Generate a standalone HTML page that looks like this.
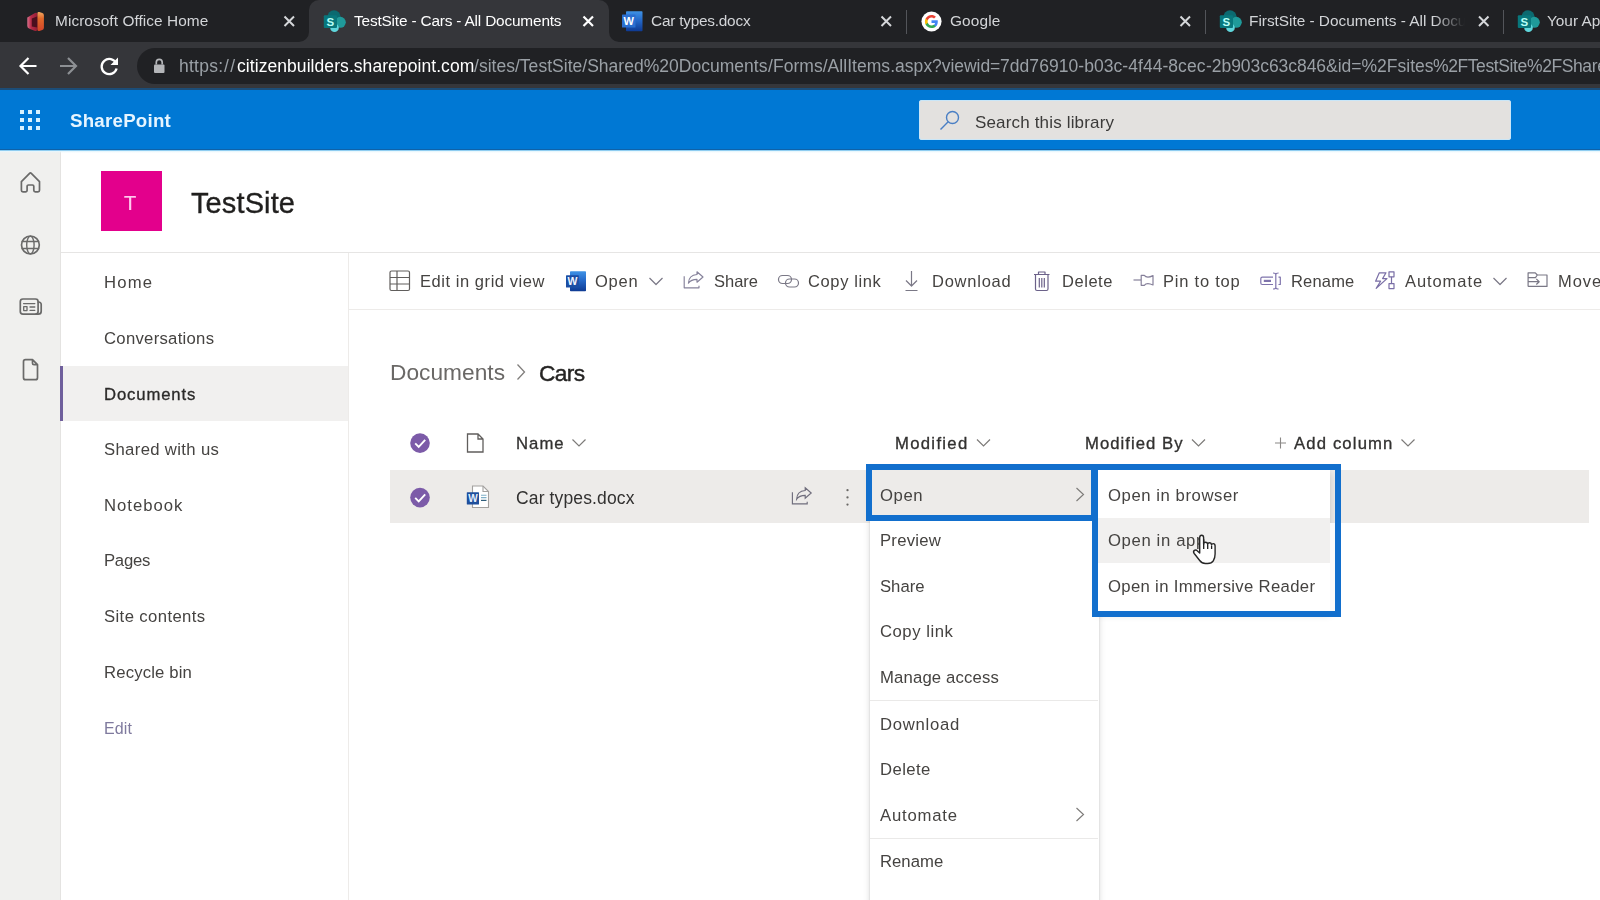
<!DOCTYPE html>
<html><head><meta charset="utf-8"><title>TestSite - Cars - All Documents</title>
<style>
html,body{margin:0;padding:0;background:#fff;}
#root{position:relative;width:1600px;height:900px;overflow:hidden;background:#fff;font-family:"Liberation Sans",sans-serif;}
#root *{box-sizing:border-box;}
.a{position:absolute;}
.t{position:absolute;white-space:pre;font-family:"Liberation Sans",sans-serif;will-change:transform;}
svg{position:absolute;overflow:visible;}
.fade{-webkit-mask-image:linear-gradient(90deg,#000 0,#000 185px,transparent 216px);mask-image:linear-gradient(90deg,#000 0,#000 185px,transparent 216px);}

</style></head>
<body>
<div id="root">
<!-- ===== browser chrome ===== -->
<div class="a" style="left:0;top:0;width:1600px;height:43px;background:#202124;"></div>
<div class="a" style="left:0;top:42px;width:1600px;height:48px;background:#35363a;"></div>
<!-- active tab -->
<div class="a" style="left:309px;top:0;width:300px;height:43px;background:#35363a;border-radius:10px 10px 0 0;"></div>
<svg style="left:299px;top:32px" width="10" height="10"><path d="M10 0 V10 H0 A10 10 0 0 0 10 0Z" fill="#35363a"/></svg>
<svg style="left:609px;top:32px" width="10" height="10"><path d="M0 0 V10 H10 A10 10 0 0 1 0 0Z" fill="#35363a"/></svg>
<!-- tab separators -->
<div class="a" style="left:906px;top:10px;width:1px;height:24px;background:#53555a;"></div>
<div class="a" style="left:1205px;top:10px;width:1px;height:24px;background:#53555a;"></div>
<div class="a" style="left:1503px;top:10px;width:1px;height:24px;background:#53555a;"></div>
<!-- close X's -->
<svg style="left:0;top:0" width="1600" height="43" fill="none" stroke-linecap="butt">
 <g stroke="#d5d7da" stroke-width="2">
  <path d="M284.5 16.5 l9.5 9.5 m0 -9.5 l-9.5 9.5"/>
  <path d="M881.5 16.5 l9.5 9.5 m0 -9.5 l-9.5 9.5"/>
  <path d="M1180.5 16.5 l9.5 9.5 m0 -9.5 l-9.5 9.5"/>
  <path d="M1479 16.5 l9.5 9.5 m0 -9.5 l-9.5 9.5"/>
 </g>
 <path d="M583.5 16.5 l9.5 9.5 m0 -9.5 l-9.5 9.5" stroke="#ffffff" stroke-width="2.2"/>
</svg>
<!-- favicons -->
<svg style="left:26px;top:10px" width="20" height="23" viewBox="0 0 20 23">
 <defs>
  <linearGradient id="og1" x1="0" y1="0" x2="1" y2="0"><stop offset="0" stop-color="#d9708c"/><stop offset="0.350" stop-color="#b82d4a"/><stop offset="1" stop-color="#8e1c32"/></linearGradient>
  <linearGradient id="og2" x1="0" y1="0" x2="0" y2="1"><stop offset="0" stop-color="#f2a862"/><stop offset="0.350" stop-color="#e0692a"/><stop offset="1" stop-color="#d2432a"/></linearGradient>
 </defs>
 <path d="M1.300 7.500 L9 3 Q11.700 2 11.700 4.500 V18.500 Q11.700 21.800 8.500 20.800 L3.500 18.800 Q1.300 18 1.300 16 Z" fill="url(#og1)"/>
 <path d="M5.800 8.500 L11.700 6.200 V17.500 L5.800 16.500 Z" fill="#4b0f1e"/>
 <path d="M11.500 3 Q11.500 1.500 13.300 2 L16.300 3 Q17.900 3.500 17.900 5.200 V17.800 Q17.900 19.500 16.300 20 L13.300 21 Q11.500 21.400 11.500 19.800 Z" fill="url(#og2)"/>
</svg>
<svg id="sp1" style="left:323px;top:10px" width="23" height="23" viewBox="0 0 23 23">
 <circle cx="11" cy="6.800" r="6.600" fill="#0b6a70"/><circle cx="17.300" cy="12.300" r="5.500" fill="#1f9a9a"/><circle cx="11.500" cy="17.800" r="4.300" fill="#5fd6dc"/>
 <rect x="0.800" y="5.300" width="13.200" height="12.600" rx="1" fill="#08777c"/>
 <text x="7.400" y="15.700" font-family="Liberation Sans, sans-serif" font-size="11.500" font-weight="700" fill="#b8fff8" text-anchor="middle">S</text>
</svg>
<svg style="left:1219px;top:10px" width="23" height="23" viewBox="0 0 23 23">
 <circle cx="11" cy="6.800" r="6.600" fill="#0b6a70"/><circle cx="17.300" cy="12.300" r="5.500" fill="#1f9a9a"/><circle cx="11.500" cy="17.800" r="4.300" fill="#5fd6dc"/>
 <rect x="0.800" y="5.300" width="13.200" height="12.600" rx="1" fill="#08777c"/>
 <text x="7.400" y="15.700" font-family="Liberation Sans, sans-serif" font-size="11.500" font-weight="700" fill="#b8fff8" text-anchor="middle">S</text>
</svg>
<svg style="left:1517px;top:10px" width="23" height="23" viewBox="0 0 23 23">
 <circle cx="11" cy="6.800" r="6.600" fill="#0b6a70"/><circle cx="17.300" cy="12.300" r="5.500" fill="#1f9a9a"/><circle cx="11.500" cy="17.800" r="4.300" fill="#5fd6dc"/>
 <rect x="0.800" y="5.300" width="13.200" height="12.600" rx="1" fill="#08777c"/>
 <text x="7.400" y="15.700" font-family="Liberation Sans, sans-serif" font-size="11.500" font-weight="700" fill="#b8fff8" text-anchor="middle">S</text>
</svg>
<!-- word favicon -->
<svg style="left:622px;top:10.500px" width="21" height="21" viewBox="0 0 21 21">
 <rect x="4" y="0.200" width="16.500" height="20" rx="0.800" fill="url(#wg)"/>
 <rect x="0" y="3.500" width="13.500" height="13" rx="0.600" fill="#2b6fd0"/>
 <text x="6.700" y="14.200" font-family="Liberation Sans, sans-serif" font-size="11" font-weight="700" fill="#ffffff" text-anchor="middle">W</text>
</svg>
<!-- google favicon -->
<svg style="left:920.5px;top:10.5px" width="21" height="21" viewBox="0 0 24 24">
 <circle cx="12" cy="12" r="11.5" fill="#fff"/>
 <path d="M19.2 12.2c0-.55-.05-1.05-.14-1.55H12v2.95h4.05c-.18.95-.7 1.75-1.5 2.28v1.9h2.43c1.42-1.3 2.22-3.23 2.22-5.58z" fill="#4285f4"/>
 <path d="M12 19.5c2.03 0 3.73-.67 4.98-1.82l-2.43-1.9c-.67.45-1.53.72-2.55.72-1.96 0-3.62-1.32-4.22-3.1H5.27v1.96C6.5 17.82 9.05 19.5 12 19.5z" fill="#34a853"/>
 <path d="M7.78 13.4c-.15-.45-.24-.93-.24-1.4s.09-.95.24-1.4V8.64H5.27C4.76 9.65 4.47 10.8 4.47 12s.29 2.35.8 3.36l2.51-1.96z" fill="#fbbc05"/>
 <path d="M12 7.5c1.1 0 2.1.38 2.88 1.13l2.16-2.16C15.72 5.25 14.03 4.5 12 4.5 9.05 4.5 6.5 6.18 5.27 8.64l2.51 1.96c.6-1.78 2.26-3.1 4.22-3.1z" fill="#ea4335"/>
</svg>
<!-- toolbar -->
<div class="a" style="left:137px;top:47.5px;width:1500px;height:36px;border-radius:18px;background:#202124;"></div>
<svg style="left:0;top:42px" width="180" height="48" fill="none" stroke-linecap="butt" stroke-linejoin="miter">
 <path d="M36.5 24 H21 M28.5 16 L20.5 24 L28.5 32" stroke="#ffffff" stroke-width="2.2"/>
 <path d="M60 24 H75.5 M68 16 L76 24 L68 32" stroke="#8d9094" stroke-width="2.2"/>
 <path d="M116.2 21.5 A7.6 7.6 0 1 0 116.6 26.5" stroke="#ffffff" stroke-width="2.3"/>
 <path d="M118 15.5 V23 H110.5 Z" fill="#ffffff" stroke="none"/>
 <rect x="154" y="22.5" width="10.5" height="8.5" rx="1" fill="#b4b6b9" stroke="none"/>
 <path d="M156.3 22.5 V20.3 a2.95 2.95 0 0 1 5.9 0 V22.5" stroke="#b4b6b9" stroke-width="1.7"/>
</svg>
<!-- ===== suite bar ===== -->
<div class="a" style="left:0;top:89px;width:1600px;height:61px;background:#0078d4;"></div>
<div class="a" style="left:0;top:88px;width:1600px;height:2px;background:#1b4d78;"></div>
<svg style="left:20px;top:110px" width="20" height="20" fill="#d8f2ff">
 <rect x="0" y="0" width="4" height="4"/><rect x="8" y="0" width="4" height="4"/><rect x="16" y="0" width="4" height="4"/>
 <rect x="0" y="8" width="4" height="4"/><rect x="8" y="8" width="4" height="4"/><rect x="16" y="8" width="4" height="4"/>
 <rect x="0" y="16" width="4" height="4"/><rect x="8" y="16" width="4" height="4"/><rect x="16" y="16" width="4" height="4"/>
</svg>
<div class="a" style="left:0;top:149px;width:1600px;height:1px;background:#0f62a8;"></div>
<div class="a" style="left:0;top:150px;width:1600px;height:3px;background:linear-gradient(#8fcdf1 0,#8fcdf1 28%,#e6f6fd 40%,rgba(255,255,255,0) 100%);z-index:2;"></div>
<!-- search box -->
<div class="a" style="left:918.5px;top:100px;width:592px;height:40px;border-radius:3px;background:#e3e1df;box-shadow:inset 0 0 0 1px #c9e6f8;"></div>
<svg style="left:938px;top:109px" width="24" height="24" fill="none" stroke="#4a7fc4" stroke-width="1.4">
 <circle cx="14.5" cy="8.5" r="6"/><path d="M10.2 12.8 L2.5 20.5"/>
</svg>
<!-- ===== app bar left ===== -->
<div class="a" style="left:0;top:150px;width:60px;height:750px;background:#f0f0ee;"></div>
<div class="a" style="left:60px;top:150px;width:1px;height:750px;background:#e4e3e1;"></div>
<svg style="left:0;top:150px" width="60" height="260" fill="none" stroke="#6a6a69" stroke-width="1.7" stroke-linejoin="round" stroke-linecap="round">
 <!-- home (abs y = 150 + y) -->
 <path d="M21.4 31.6 L29.6 23.3 a1.2 1.2 0 0 1 1.700 0 L39.500 31.600 V40.300 a1.500 1.500 0 0 1 -1.500 1.500 H35.300 a1.500 1.500 0 0 1 -1.500 -1.500 V36.300 a1.300 1.300 0 0 0 -1.300 -1.300 H28.400 a1.300 1.300 0 0 0 -1.300 1.300 V40.300 a1.500 1.500 0 0 1 -1.500 1.500 H22.900 a1.500 1.500 0 0 1 -1.500 -1.500 Z"/>
 <!-- globe -->
 <circle cx="30.4" cy="95" r="8.9"/><ellipse cx="30.400" cy="95" rx="3.700" ry="8.900" stroke-width="1.400"/><path d="M22.300 91.500 H38.500 M22.300 98.500 H38.500" stroke-width="1.400"/>
 <!-- news -->
 <rect x="20.300" y="149" width="17.800" height="15.200" rx="2.600"/><path d="M38.100 152 H38.700 a2.500 2.500 0 0 1 2.500 2.500 V161.200 a3 3 0 0 1 -3 3 H36"/>
 <path d="M23.600 153.600 H34.800" stroke-width="1.400"/><rect x="23.700" y="156.600" width="3.300" height="4" stroke-width="1.300"/><path d="M30 157 H34.800 M30 160.300 H34.800" stroke-width="1.300"/>
 <!-- page -->
 <path d="M25.500 209.700 H32.500 L37.500 214.700 V227.700 a2 2 0 0 1 -2 2 H25.500 a2 2 0 0 1 -2 -2 V211.700 a2 2 0 0 1 2 -2 Z M32.500 209.700 V213.200 a1.500 1.500 0 0 0 1.500 1.500 H37.500"/>
</svg>
<!-- ===== site header ===== -->
<div class="a" style="left:101px;top:171px;width:61px;height:60px;background:#e3008c;"></div>
<div class="a" style="left:61px;top:252px;width:1539px;height:1px;background:#e6e5e4;"></div>
<!-- ===== left nav ===== -->
<div class="a" style="left:348px;top:253px;width:1px;height:647px;background:#edebe9;"></div>
<div class="a" style="left:61px;top:366px;width:287px;height:55px;background:#f1f0ef;"></div>
<div class="a" style="left:60px;top:366px;width:3px;height:55px;background:#6f5f9c;"></div>
<!-- ===== command bar ===== -->
<div class="a" style="left:349px;top:309px;width:1251px;height:1px;background:#edebe9;"></div>
<svg id="cmdicons" style="left:0;top:260px" width="1600" height="45" fill="none" stroke="#6b6189" stroke-width="1.2" stroke-linejoin="round">
 <!-- grid -->
 <g stroke="#605e5c"><rect x="390" y="11" width="19.5" height="19.5" rx="1.5"/><path d="M390 17.5 H409.5 M390 24 H409.5 M397 11 V30.5"/></g>
 <!-- open chevron -->
 <path d="M649.5 18 L656 24.5 L662.5 18" stroke="#7a7886"/>
 <!-- share -->
 <g stroke="#85819a" stroke-width="1.15" transform="translate(0,1.6)"><path d="M684.2 14.600 V26.200 H699 V24.200"/><path d="M697 10.200 L703 15.400 L697 20.600 V17.800 C692.700 17.800 690.200 19 688.400 21.600 C688.600 16.700 691.600 13.300 697 12.900 Z"/></g>
 <!-- copy link -->
 <rect x="778.5" y="15.5" width="13" height="8" rx="4" stroke="#7a7886"/><rect x="785.5" y="19" width="13" height="8" rx="4" stroke="#7a7886"/>
 <!-- download -->
 <path d="M911.5 11 V26 M906 20.5 L911.5 26 L917 20.5 M905.5 30.5 H917.5" stroke="#7a7886"/>
 <!-- delete -->
 <path d="M1034 14.5 H1049.5 M1038.5 14.5 V12 H1045 V14.5 M1035.5 14.5 V29 a1.5 1.5 0 0 0 1.5 1.5 H1046.5 a1.5 1.5 0 0 0 1.5 -1.5 V14.5 M1039.3 18 V27.5 M1041.8 18 V27.5 M1044.3 18 V27.5"/>
 <!-- pin -->
 <path d="M1133.5 20 H1141" stroke="#86809a"/><path d="M1141.2 15.3 H1144.3 C1146 17.6 1149.5 17.3 1153 15.6 V25 C1149.500 23.300 1146 23 1144.300 25.300 H1141.200 Z" stroke="#86809a"/>
 <!-- rename -->
 <path d="M1273 17.2 H1262.300 a1.500 1.500 0 0 0 -1.500 1.500 V23 a1.500 1.500 0 0 0 1.500 1.500 H1273 M1278.500 17.200 H1280.300 V24.500 H1278.500" stroke="#7f74ac"/><path d="M1263.800 20.900 H1271" stroke="#7f74ac" stroke-width="2.200"/><path d="M1275.800 14 V28 M1273 13 Q1275.800 13 1275.800 14.500 Q1275.800 13 1278.600 13 M1273 29 Q1275.800 29 1275.800 27.500 Q1275.800 29 1278.600 29" stroke="#7f74ac"/>
 <!-- automate -->
 <path d="M1379.300 12.800 H1386 L1382.600 18.600 H1387 L1376.200 28.300 L1380.600 21.200 H1375.600 Z" stroke="#7a6fa6"/><rect x="1389" y="11.800" width="5" height="5" stroke="#7a6fa6"/><rect x="1389" y="23.600" width="5" height="5" stroke="#7a6fa6"/><path d="M1391.500 16.800 V23.600" stroke="#7a6fa6"/>
 <path d="M1493.500 18 L1500 24.500 L1506.500 18" stroke="#7a7886"/>
 <!-- move -->
 <path d="M1528.100 26.400 V12.800 H1535.300 L1537.300 15 H1547 V26.400 H1528.100 M1528.100 17.600 H1535.500 L1537.300 15 M1528.100 21.700 H1539 M1536.300 18.900 L1539.200 21.700 L1536.300 24.500" stroke="#7a7886"/>
</svg>
<!-- word icon in command bar -->
<svg style="left:565.5px;top:270.5px" width="21" height="21" viewBox="0 0 21 21">
 <defs><linearGradient id="wg" x1="0" y1="0" x2="0" y2="1"><stop offset="0" stop-color="#3f93e6"/><stop offset="0.45" stop-color="#2569c9"/><stop offset="1" stop-color="#0e3a93"/></linearGradient></defs>
 <rect x="4" y="0.200" width="16" height="20" rx="0.800" fill="url(#wg)"/>
 <rect x="0" y="4.200" width="12.800" height="12.300" rx="0.600" fill="#1c4ea3"/>
 <text x="6.400" y="14.300" font-family="Liberation Sans, sans-serif" font-size="10.500" font-weight="700" fill="#f2f6ff" text-anchor="middle">W</text>
</svg>
<!-- breadcrumb chevron -->
<svg style="left:515px;top:362px" width="12" height="20" fill="none" stroke="#807e7c" stroke-width="1.3"><path d="M2.5 2.5 L9.5 10 L2.5 17.5"/></svg>
<!-- ===== list ===== -->
<div class="a" style="left:390px;top:470px;width:1199px;height:53px;background:#edebe9;"></div>
<svg id="listicons" style="left:0;top:420px" width="1600" height="110" fill="none" stroke="#605e5c" stroke-width="1.2">
 <!-- checks -->
 <circle cx="420" cy="23.1" r="9.8" fill="#7c5ba8" stroke="none"/><path d="M415.2 23.4 L418.7 26.9 L425.2 19.9" stroke="#fff" stroke-width="1.9"/>
 <circle cx="420" cy="77.600" r="9.800" fill="#7c5ba8" stroke="none"/><path d="M415.200 77.900 L418.700 81.400 L425.200 74.400" stroke="#fff" stroke-width="1.9"/>
 <!-- file icon header -->
 <path d="M467.5 14 H478 L483 19 V32 H467.5 Z M478 14 V19 H483" stroke-width="1.3"/>
 <!-- chevrons -->
 <g stroke="#7d7b79"><path d="M572.500 19.500 L579 26 L585.500 19.500"/><path d="M977 19.5 L983.5 26 L990 19.5"/><path d="M1192 19.5 L1198.5 26 L1205 19.5"/><path d="M1401.500 19.500 L1408 26 L1414.500 19.500"/></g>
 <!-- plus -->
 <path d="M1275 23 H1286 M1280.5 17.500 V28.5" stroke="#8a8886" stroke-width="1.1"/>
 <!-- share small -->
 <g stroke="#6f6d7c" stroke-width="1.150" transform="translate(108.2,57.6)"><path d="M684.200 14.600 V26.200 H699 V24.200"/><path d="M697 10.200 L703 15.400 L697 20.600 V17.800 C692.700 17.800 690.200 19 688.400 21.600 C688.600 16.700 691.600 13.300 697 12.900 Z"/></g>
 <!-- ellipsis -->
 <g fill="#6a6866" stroke="none"><circle cx="847.500" cy="70.200" r="1.150"/><circle cx="847.500" cy="77.400" r="1.150"/><circle cx="847.500" cy="84.600" r="1.150"/></g>
</svg>
<!-- docx row icon -->
<svg style="left:466px;top:485px" width="24" height="24" viewBox="0 0 24 24">
 <path d="M6.5 1 H17 L22.500 6.500 V22.500 H6.500 Z" fill="#fff" stroke="#a3a19f" stroke-width="1.100"/>
 <path d="M17 1 V6.500 H22.500" fill="none" stroke="#a3a19f" stroke-width="1.100"/>
 <path d="M15 10.300 H20.500 M15 12.600 H20.500" stroke="#7fb0c8" stroke-width="1.100"/><path d="M15 15.400 H20.500" stroke="#2e5c7a" stroke-width="1.200"/>
 <rect x="0.800" y="7.300" width="12.200" height="12.200" rx="0.500" fill="#1f4f9c"/>
 <text x="6.900" y="17.100" font-family="Liberation Sans, sans-serif" font-size="10" font-weight="700" fill="#e8f2ff" text-anchor="middle">W</text>
</svg>
<!-- ===== context menu ===== -->
<div class="a" style="left:870px;top:468px;width:229px;height:440px;background:#fff;box-shadow:0 3px 7px rgba(0,0,0,.14),0 0 2px rgba(0,0,0,.14);"></div>
<div class="a" style="left:870px;top:470px;width:228px;height:47px;background:#edebe9;"></div>
<div class="a" style="left:870px;top:700px;width:228px;height:1px;background:#eae9e8;"></div>
<div class="a" style="left:870px;top:838px;width:228px;height:1px;background:#eae9e8;"></div>
<svg style="left:1070px;top:479.5px" width="20" height="350" fill="none" stroke="#7d7b79" stroke-width="1.150"><path d="M6.500 8 L13.500 14.500 L6.500 21"/><path d="M6.500 328 L13.500 334.500 L6.500 341"/></svg>
<!-- submenu -->
<div class="a" style="left:1098px;top:470px;width:232px;height:141px;background:#fff;box-shadow:0 3px 8px rgba(0,0,0,.18);"></div>
<div class="a" style="left:1098px;top:518px;width:232px;height:45px;background:#f1f0ef;"></div>
<div class="a" style="left:1330px;top:523px;width:5px;height:88px;background:#fbfbfb;"></div>

<span class="t" style="left:55.307px;top:8.50px;line-height:24px;font-size:15.4px;font-weight:400;color:#d3d5d8;letter-spacing:0.068px;">Microsoft Office Home</span>
<span class="t" style="left:353.807px;top:8.50px;line-height:24px;font-size:15.4px;font-weight:400;color:#ffffff;letter-spacing:-0.180px;">TestSite - Cars - All Documents</span>
<span class="t" style="left:651.307px;top:8.50px;line-height:24px;font-size:15.4px;font-weight:400;color:#d3d5d8;letter-spacing:-0.234px;">Car types.docx</span>
<span class="t" style="left:950.307px;top:8.50px;line-height:24px;font-size:15.4px;font-weight:400;color:#d3d5d8;letter-spacing:0.124px;">Google</span>
<span class="t fade" style="left:1249.307px;top:8.50px;line-height:24px;font-size:15.4px;font-weight:400;color:#d3d5d8;letter-spacing:-0.022px;">FirstSite - Documents - All Docu</span>
<span class="t" style="left:1547.307px;top:8.50px;line-height:24px;font-size:15.4px;font-weight:400;color:#d3d5d8;letter-spacing:-0.022px;">Your Ap</span>
<span class="t" style="left:178.9px;top:54.00px;line-height:24px;font-size:17.5px;font-weight:400;color:#9aa0a6;letter-spacing:0.248px;">https:</span>
<span class="t" style="left:224.2px;top:54.00px;line-height:24px;font-size:17.5px;font-weight:400;color:#9aa0a6;letter-spacing:1.433px;">//</span>
<span class="t" style="left:236.6px;top:54.00px;line-height:24px;font-size:17.5px;font-weight:400;color:#ffffff;letter-spacing:0.066px;">citizenbuilders.sharepoint.com</span>
<span class="t" style="left:474px;top:54.00px;line-height:24px;font-size:17.5px;font-weight:400;color:#9aa0a6;letter-spacing:0.021px;">/sites/TestSite/Shared%20Documents</span>
<span class="t" style="left:767.5px;top:54.00px;line-height:24px;font-size:17.5px;font-weight:400;color:#9aa0a6;letter-spacing:0.041px;">/Forms/AllItems.aspx</span>
<span class="t" style="left:931.7px;top:54.00px;line-height:24px;font-size:17.5px;font-weight:400;color:#9aa0a6;letter-spacing:-0.037px;">?viewid=</span>
<span class="t" style="left:1000px;top:54.00px;line-height:24px;font-size:17.5px;font-weight:400;color:#9aa0a6;letter-spacing:0.051px;">7dd76910-b03c-4f44-8cec</span>
<span class="t" style="left:1205.5px;top:54.00px;line-height:24px;font-size:17.5px;font-weight:400;color:#9aa0a6;letter-spacing:-0.050px;">-2b903c63c846</span>
<span class="t" style="left:1325.5px;top:54.00px;line-height:24px;font-size:17.5px;font-weight:400;color:#9aa0a6;letter-spacing:0.001px;">&amp;id=%2Fsites</span>
<span class="t" style="left:1433px;top:54.00px;line-height:24px;font-size:17.5px;font-weight:400;color:#9aa0a6;letter-spacing:-0.403px;">%2FTestSite</span>
<span class="t" style="left:1526.8px;top:54.00px;line-height:24px;font-size:17.5px;font-weight:400;color:#9aa0a6;letter-spacing:-0.403px;">%2FShared%20Documents</span>
<span class="t" style="left:70.1585px;top:107.50px;line-height:26px;font-size:18.7px;font-weight:700;color:#e6f5ff;letter-spacing:0.243px;">SharePoint</span>
<span class="t" style="left:974.535px;top:110.50px;line-height:24px;font-size:17px;font-weight:400;color:#3b3a39;letter-spacing:0.161px;">Search this library</span>
<span class="t" style="left:124.3px;top:189.00px;line-height:28px;font-size:20px;font-weight:400;color:#ffc8ee;letter-spacing:0.781px;-webkit-text-stroke:0.24px #ffc8ee;">T</span>
<span class="t" style="left:191.295px;top:183.00px;line-height:40px;font-size:29px;font-weight:400;color:#201f1e;letter-spacing:0.117px;-webkit-text-stroke:0.35px #201f1e;">TestSite</span>
<span class="t" style="left:103.7485px;top:270.50px;line-height:24px;font-size:16.7px;font-weight:400;color:#454341;letter-spacing:1.172px;">Home</span>
<span class="t" style="left:103.7485px;top:326.50px;line-height:24px;font-size:16.7px;font-weight:400;color:#454341;letter-spacing:0.279px;">Conversations</span>
<span class="t" style="left:103.7485px;top:382.50px;line-height:24px;font-size:16.7px;font-weight:400;color:#2b2a29;letter-spacing:0.855px;-webkit-text-stroke:0.32px #2b2a29;">Documents</span>
<span class="t" style="left:103.7485px;top:437.50px;line-height:24px;font-size:16.7px;font-weight:400;color:#454341;letter-spacing:0.344px;">Shared with us</span>
<span class="t" style="left:103.7485px;top:493.50px;line-height:24px;font-size:16.7px;font-weight:400;color:#454341;letter-spacing:0.971px;">Notebook</span>
<span class="t" style="left:103.7485px;top:548.50px;line-height:24px;font-size:16.7px;font-weight:400;color:#454341;letter-spacing:-0.265px;">Pages</span>
<span class="t" style="left:103.7485px;top:604.50px;line-height:24px;font-size:16.7px;font-weight:400;color:#454341;letter-spacing:0.386px;">Site contents</span>
<span class="t" style="left:103.7485px;top:660.50px;line-height:24px;font-size:16.7px;font-weight:400;color:#454341;letter-spacing:0.158px;">Recycle bin</span>
<span class="t" style="left:103.78px;top:716.50px;line-height:24px;font-size:16px;font-weight:400;color:#7f7a9e;letter-spacing:0.090px;">Edit</span>
<span class="t" style="left:420.2575px;top:269.00px;line-height:24px;font-size:16.5px;font-weight:400;color:#454341;letter-spacing:0.554px;">Edit in grid view</span>
<span class="t" style="left:595.2575px;top:269.00px;line-height:24px;font-size:16.5px;font-weight:400;color:#454341;letter-spacing:0.777px;">Open</span>
<span class="t" style="left:714.2575px;top:269.00px;line-height:24px;font-size:16.5px;font-weight:400;color:#454341;letter-spacing:-0.009px;">Share</span>
<span class="t" style="left:808.2575px;top:269.00px;line-height:24px;font-size:16.5px;font-weight:400;color:#454341;letter-spacing:0.623px;">Copy link</span>
<span class="t" style="left:932.2575px;top:269.00px;line-height:24px;font-size:16.5px;font-weight:400;color:#454341;letter-spacing:0.762px;">Download</span>
<span class="t" style="left:1062.2575px;top:269.00px;line-height:24px;font-size:16.5px;font-weight:400;color:#454341;letter-spacing:0.547px;">Delete</span>
<span class="t" style="left:1163.2575px;top:269.00px;line-height:24px;font-size:16.5px;font-weight:400;color:#454341;letter-spacing:0.777px;">Pin to top</span>
<span class="t" style="left:1291.2575px;top:269.00px;line-height:24px;font-size:16.5px;font-weight:400;color:#454341;letter-spacing:0.185px;">Rename</span>
<span class="t" style="left:1404.7575px;top:269.00px;line-height:24px;font-size:16.5px;font-weight:400;color:#454341;letter-spacing:0.920px;">Automate</span>
<span class="t" style="left:1558.2575px;top:269.00px;line-height:24px;font-size:16.5px;font-weight:400;color:#454341;letter-spacing:0.920px;">Move to</span>
<span class="t" style="left:389.5785px;top:356.50px;line-height:31px;font-size:22.7px;font-weight:400;color:#6a6866;letter-spacing:0.033px;">Documents</span>
<span class="t" style="left:539.0785000000001px;top:357.50px;line-height:31px;font-size:22.7px;font-weight:400;color:#252423;letter-spacing:-0.591px;-webkit-text-stroke:0.43px #252423;">Cars</span>
<span class="t" style="left:515.7485px;top:431.50px;line-height:24px;font-size:16.7px;font-weight:400;color:#323130;letter-spacing:1.022px;-webkit-text-stroke:0.32px #323130;">Name</span>
<span class="t" style="left:895.2485px;top:431.50px;line-height:24px;font-size:16.7px;font-weight:400;color:#323130;letter-spacing:1.303px;-webkit-text-stroke:0.32px #323130;">Modified</span>
<span class="t" style="left:1085.0484999999999px;top:431.50px;line-height:24px;font-size:16.7px;font-weight:400;color:#323130;letter-spacing:1.038px;-webkit-text-stroke:0.32px #323130;">Modified By</span>
<span class="t" style="left:1293.6485px;top:431.50px;line-height:24px;font-size:16.7px;font-weight:400;color:#323130;letter-spacing:1.138px;-webkit-text-stroke:0.32px #323130;">Add column</span>
<span class="t" style="left:515.7125px;top:486.00px;line-height:24px;font-size:17.5px;font-weight:400;color:#323130;letter-spacing:0.133px;">Car types.docx</span>
<span class="t" style="left:880.2485px;top:483.50px;line-height:24px;font-size:16.7px;font-weight:400;color:#454341;letter-spacing:0.569px;">Open</span>
<span class="t" style="left:880.2485px;top:528.50px;line-height:24px;font-size:16.7px;font-weight:400;color:#454341;letter-spacing:0.235px;">Preview</span>
<span class="t" style="left:880.2485px;top:574.50px;line-height:24px;font-size:16.7px;font-weight:400;color:#454341;letter-spacing:-0.006px;">Share</span>
<span class="t" style="left:880.2485px;top:619.50px;line-height:24px;font-size:16.7px;font-weight:400;color:#454341;letter-spacing:0.518px;">Copy link</span>
<span class="t" style="left:880.2485px;top:665.50px;line-height:24px;font-size:16.7px;font-weight:400;color:#454341;letter-spacing:0.162px;">Manage access</span>
<span class="t" style="left:880.2485px;top:712.50px;line-height:24px;font-size:16.7px;font-weight:400;color:#454341;letter-spacing:0.736px;">Download</span>
<span class="t" style="left:880.2485px;top:757.50px;line-height:24px;font-size:16.7px;font-weight:400;color:#454341;letter-spacing:0.425px;">Delete</span>
<span class="t" style="left:880.2485px;top:803.50px;line-height:24px;font-size:16.7px;font-weight:400;color:#454341;letter-spacing:0.808px;">Automate</span>
<span class="t" style="left:880.2485px;top:849.50px;line-height:24px;font-size:16.7px;font-weight:400;color:#454341;letter-spacing:0.021px;">Rename</span>
<span class="t" style="left:1107.8484999999998px;top:483.50px;line-height:24px;font-size:16.7px;font-weight:400;color:#454341;letter-spacing:0.564px;">Open in browser</span>
<span class="t" style="left:1107.8484999999998px;top:528.50px;line-height:24px;font-size:16.7px;font-weight:400;color:#454341;letter-spacing:0.633px;">Open in app</span>
<span class="t" style="left:1107.8484999999998px;top:574.50px;line-height:24px;font-size:16.7px;font-weight:400;color:#454341;letter-spacing:0.329px;">Open in Immersive Reader</span>
<!-- blue highlight boxes -->
<div class="a" style="left:866px;top:464px;width:231px;height:57px;border:6px solid #126fcd;"></div>
<div class="a" style="left:1092px;top:464px;width:249px;height:153px;border:6px solid #126fcd;"></div>
<!-- hand cursor -->
<svg style="left:1188px;top:530.5px" width="32" height="38" viewBox="0 0 32 38">
 <path d="M11.700 6.500 c0 -1.400 0.900 -2.200 1.950 -2.200 s1.950 0.800 1.950 2.200 V13 c0.300 -1.200 1.100 -1.700 2 -1.700 c1.100 0 1.800 0.700 2 1.900 c0.300 -0.900 1 -1.400 1.900 -1.400 c1.100 0 1.800 0.700 2 1.900 c0.300 -0.700 0.900 -1.100 1.700 -1.100 c1.200 0 1.900 0.900 1.900 2.300 V23 c0 3.200 -0.800 5.200 -1.800 6.800 c-1 1.600 -3 2.700 -5.700 2.700 h-2.200 c-2.400 0 -4.200 -1 -5.700 -3 L6.200 22.500 c-0.800 -1.100 -0.700 -2.400 0.200 -3.100 c0.900 -0.700 2.100 -0.500 3 0.500 L11.700 22 Z" fill="#fff" stroke="#262626" stroke-width="1.400" stroke-linejoin="round"/>
 <path d="M15.700 13 V18 M19.700 13.500 V18 M23.600 14.500 V18" stroke="#1b1b1b" stroke-width="1.300" fill="none"/>
</svg>

</div>
</body></html>
